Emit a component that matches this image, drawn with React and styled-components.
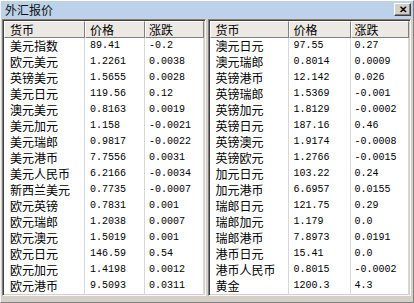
import React from "react";
import styled, { createGlobalStyle } from "styled-components";

const Global = createGlobalStyle`
  html, body { margin: 0; padding: 0; background: #d4d0c8; }
  body { font-family: "Noto Sans CJK SC", "Liberation Sans", sans-serif; }
`;

const Window = styled.div`
  width: 414px;
  height: 303px;
  box-sizing: border-box;
  background: #d4d0c8;
  border-top: 1px solid #ffffff;
  border-left: 1px solid #f4f4f4;
  border-right: 1px solid #808080;
  border-bottom: 1px solid #808080;
  display: flex;
  flex-direction: column;
  overflow: hidden;
`;

const TitleBar = styled.div`
  height: 17px;
  background: #bcd2ea;
  display: flex;
  align-items: center;
  justify-content: space-between;
  padding: 0 2px 0 4px;
  flex: none;
`;

const Title = styled.span`
  font-size: 12px;
  line-height: 17px;
  color: #111;
`;

const CloseButton = styled.div`
  width: 17px;
  height: 13px;
  box-sizing: border-box;
  background: #d4d0c8;
  border-top: 1px solid #ffffff;
  border-left: 1px solid #ffffff;
  border-right: 1px solid #404040;
  border-bottom: 1px solid #404040;
  box-shadow: inset -1px -1px 0 #808080;
  display: flex;
  align-items: center;
  justify-content: center;
  font: bold 10px/1 "Liberation Sans", sans-serif;
  color: #000;
`;

const Body = styled.div`
  flex: 1;
  display: flex;
  gap: 2px;
  padding: 1px 2px 6px 1px;
  min-height: 0;
`;

const Panel = styled.div`
  flex: 1;
  min-width: 0;
  background: #ffffff;
  border-top: 1px solid #808080;
  border-left: 1px solid #808080;
  border-right: 1px solid #f8f8f8;
  border-bottom: 1px solid #f8f8f8;
  box-shadow: inset 1px 1px 0 #404040, inset -1px -1px 0 #d4d0c8;
  padding: 1px;
  overflow: hidden;
  display: flex;
  flex-direction: column;
`;

const Row = styled.div`
  display: grid;
  grid-template-columns: ${(p) => p.$cols};
  height: ${(p) => (p.$head ? 17 : 16)}px;
  flex: none;
`;

const HeadCell = styled.div`
  background: #ece9e4;
  border-top: 1px solid #ffffff;
  border-left: 1px solid #ffffff;
  border-right: 1px solid #808080;
  border-bottom: 1px solid #808080;
  box-sizing: border-box;
  padding-left: ${(p) => p.$pad}px;
  font-size: 12px;
  line-height: 15px;
  color: #000;
  white-space: nowrap;
  overflow: hidden;
`;

const Cell = styled.div`
  border-right: 1px solid #d8d8d8;
  padding-left: ${(p) => p.$pad}px;
  font-size: ${(p) => (p.$num ? "10px" : "12px")};
  font-family: ${(p) =>
    p.$num
      ? `"Liberation Mono", monospace`
      : `"Noto Sans CJK SC", sans-serif`};
  line-height: 16px;
  color: #000;
  white-space: nowrap;
  overflow: hidden;
`;

const left = [
  ["美元指数", "89.41", "-0.2"],
  ["欧元美元", "1.2261", "0.0038"],
  ["英镑美元", "1.5655", "0.0028"],
  ["美元日元", "119.56", "0.12"],
  ["澳元美元", "0.8163", "0.0019"],
  ["美元加元", "1.158", "-0.0021"],
  ["美元瑞郎", "0.9817", "-0.0022"],
  ["美元港币", "7.7556", "0.0031"],
  ["美元人民币", "6.2166", "-0.0034"],
  ["新西兰美元", "0.7735", "-0.0007"],
  ["欧元英镑", "0.7831", "0.001"],
  ["欧元瑞郎", "1.2038", "0.0007"],
  ["欧元澳元", "1.5019", "0.001"],
  ["欧元日元", "146.59", "0.54"],
  ["欧元加元", "1.4198", "0.0012"],
  ["欧元港币", "9.5093", "0.0311"],
  ["欧元人民币", "7.6231", "0.0012"],
];

const right = [
  ["澳元日元", "97.55", "0.27"],
  ["澳元瑞郎", "0.8014", "0.0009"],
  ["英镑港币", "12.142", "0.026"],
  ["英镑瑞郎", "1.5369", "-0.001"],
  ["英镑加元", "1.8129", "-0.0002"],
  ["英镑日元", "187.16", "0.46"],
  ["英镑澳元", "1.9174", "-0.0008"],
  ["英镑欧元", "1.2766", "-0.0015"],
  ["加元日元", "103.22", "0.24"],
  ["加元港币", "6.6957", "0.0155"],
  ["瑞郎日元", "121.75", "0.29"],
  ["瑞郎加元", "1.179", "0.0"],
  ["瑞郎港币", "7.8973", "0.0191"],
  ["港币日元", "15.41", "0.0"],
  ["港币人民币", "0.8015", "-0.0002"],
  ["黄金", "1200.3", "4.3"],
  ["白银", "16.52", "0.07"],
];

function QuoteTable({ rows, cols }) {
  return (
    <Panel>
      <Row $head $cols={cols}>
        <HeadCell $pad={5}>货币</HeadCell>
        <HeadCell $pad={4}>价格</HeadCell>
        <HeadCell $pad={3}>涨跌</HeadCell>
      </Row>
      {rows.map(([name, price, chg]) => (
        <Row key={name} $cols={cols}>
          <Cell $pad={6}>{name}</Cell>
          <Cell $pad={5} $num>{price}</Cell>
          <Cell $pad={4} $num>{chg}</Cell>
        </Row>
      ))}
    </Panel>
  );
}

export default function App() {
  return (
    <>
      <Global />
      <Window>
        <TitleBar>
          <Title>外汇报价</Title>
          <CloseButton>✕</CloseButton>
        </TitleBar>
        <Body>
          <QuoteTable rows={left} cols="81px 60px 1fr" />
          <QuoteTable rows={right} cols="79px 62px 1fr" />
        </Body>
      </Window>
    </>
  );
}
